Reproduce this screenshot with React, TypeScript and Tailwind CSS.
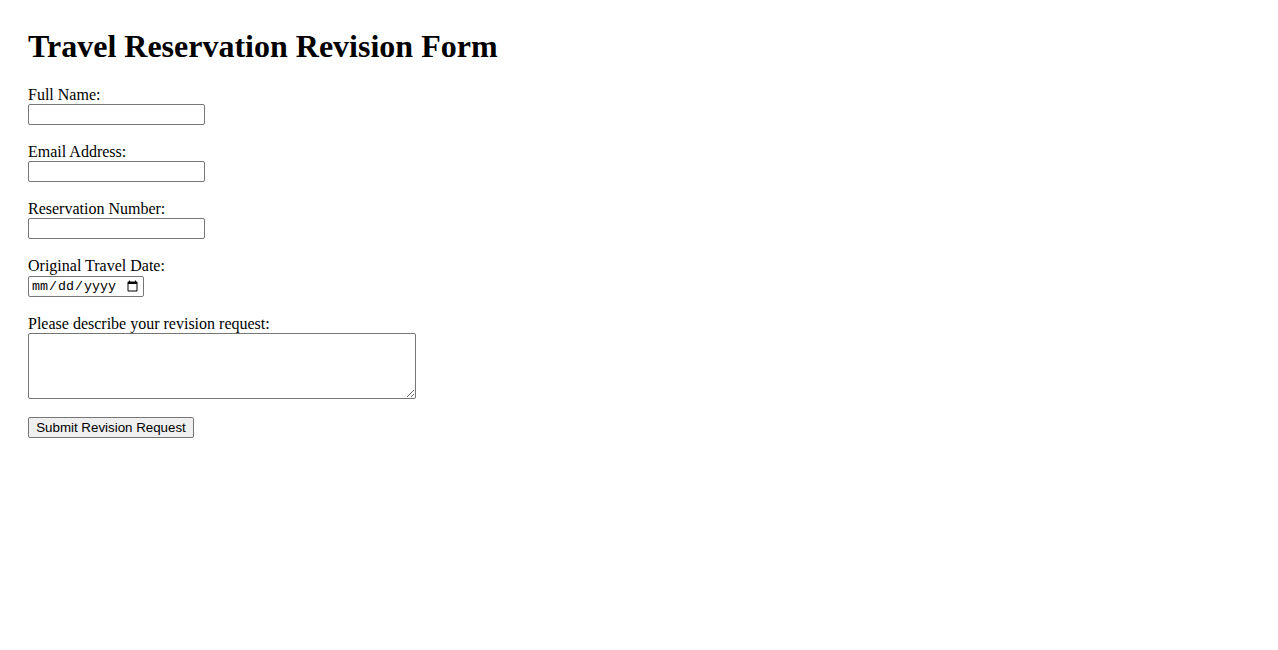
import React from "react";

function Field({ label, children, className }: { label: string; children: React.ReactNode; className?: string }) {
  return (
    <div className={className ?? "mb-[18px]"}>
      <label className="block leading-[18px]">{label}</label>
      {children}
    </div>
  );
}

const inputCls =
  "block w-[177px] h-[21px] border border-[#767676] rounded-[2px] bg-white px-[2px] py-[1px] text-[13.33px] outline-none font-['Liberation_Sans',Arial,sans-serif]";

export default function App() {
  return (
    <div className="min-h-[650px] bg-white text-black px-[28px] pt-[28px] text-[16px] font-['Liberation_Serif','Times_New_Roman',serif]">
      <h1 className="text-[32px] font-bold leading-[37px] mb-[21px]">Travel Reservation Revision Form</h1>
      <form onSubmit={(e) => e.preventDefault()}>
        <Field label="Full Name:">
          <input type="text" className={inputCls} />
        </Field>
        <Field label="Email Address:">
          <input type="email" className={inputCls} />
        </Field>
        <Field label="Reservation Number:">
          <input type="text" className={inputCls} />
        </Field>
        <Field label="Original Travel Date:" className="mb-[17px]">
          <input
            type="date"
            className="block mt-px w-[116px] h-[21px] border border-[#767676] rounded-[2px] bg-white px-[2px] py-0 text-[13.33px] outline-none font-['Liberation_Mono','DejaVu_Sans_Mono',monospace]"
          />
        </Field>
        <div className="mb-[18px]">
          <label className="block leading-[19px]">Please describe your revision request:</label>
          <textarea className="block w-[388px] h-[66px] border border-[#767676] rounded-[2px] bg-white p-[2px] text-[13.33px] outline-none font-['Liberation_Mono',monospace]" />
        </div>
        <button
          type="submit"
          className="block w-[166px] h-[21px] border border-[#767676] rounded-[2px] bg-[#efefef] px-[6px] text-[13.33px] leading-[19px] text-black text-center font-['Liberation_Sans',Arial,sans-serif]"
        >
          Submit Revision Request
        </button>
      </form>
    </div>
  );
}
